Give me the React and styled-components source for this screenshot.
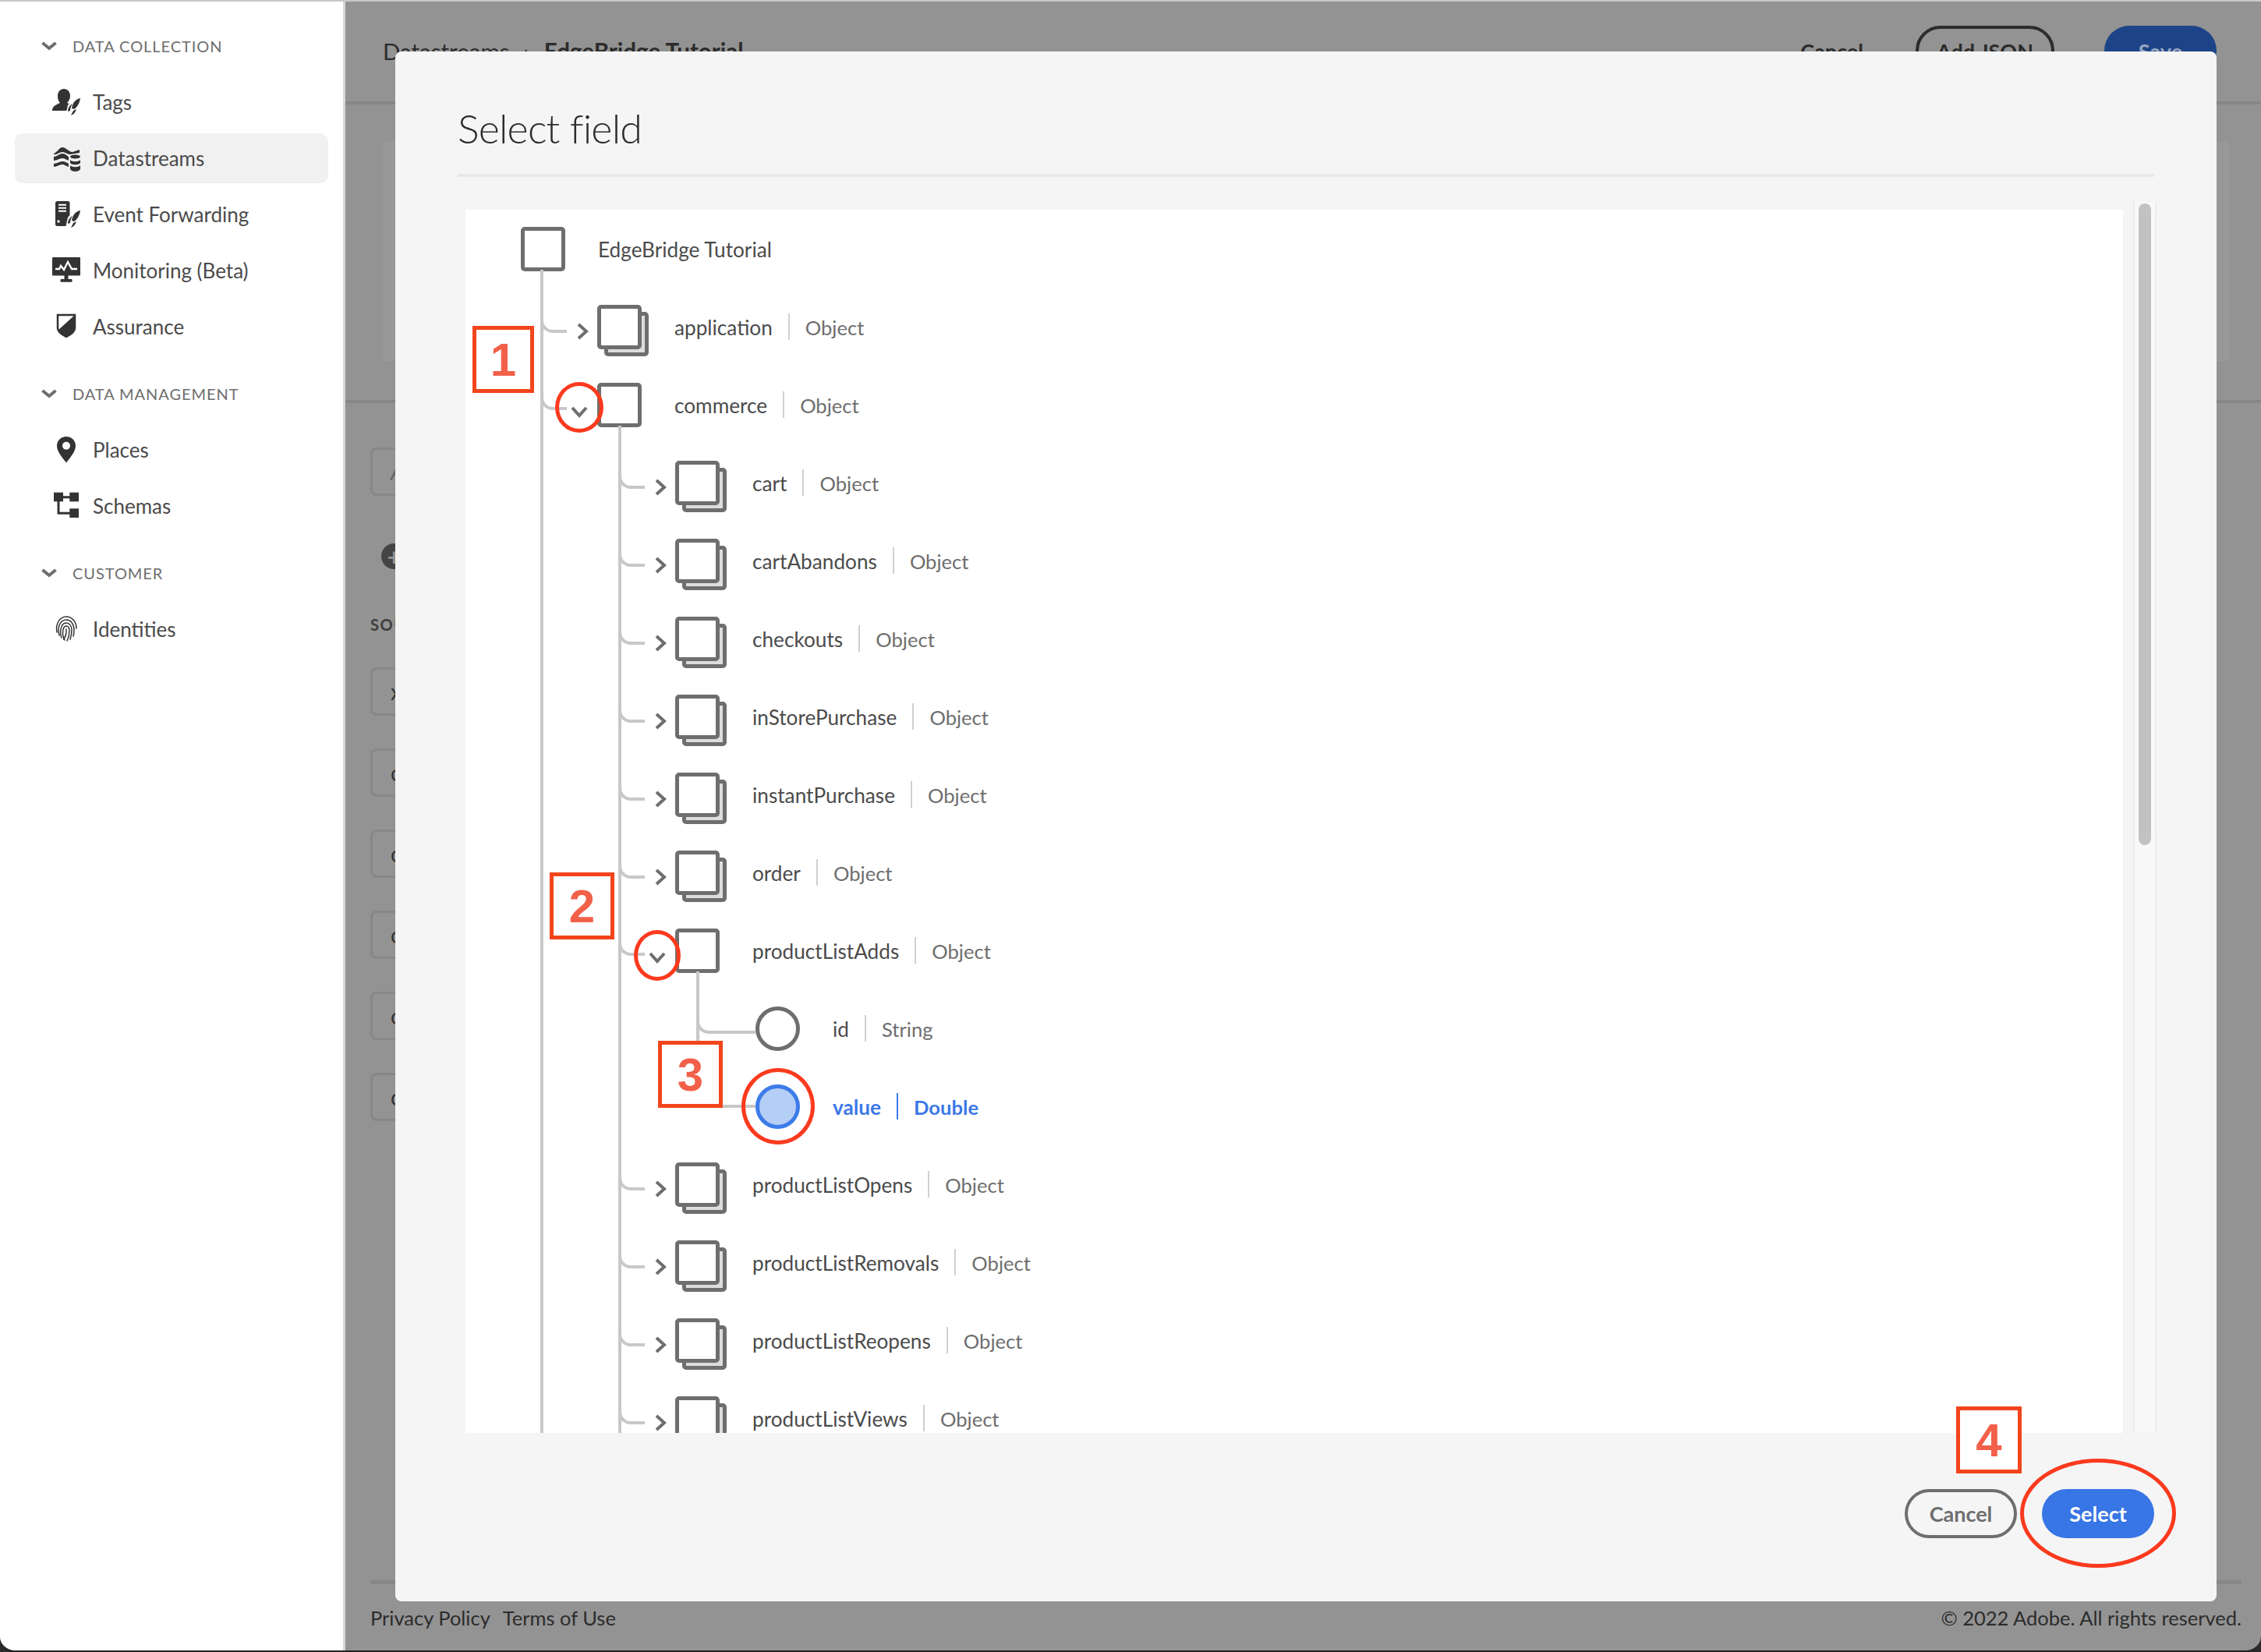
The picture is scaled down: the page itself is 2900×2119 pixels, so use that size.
import React from "react"
import styled, { createGlobalStyle } from "styled-components"

const FONT = `Lato, "Open Sans", sans-serif`

const GlobalStyle = createGlobalStyle`
  html, body {
    margin: 0;
    padding: 0;
    background: #2a2a2a;
    font-family: ${FONT};
  }
  * {
    box-sizing: border-box;
  }
`

const Frame = styled.div`
  background: #939393;
  border-bottom: 2px solid #222;
  border-radius: 0 0 20px 20px;
  border-top: 2px solid #c9c9c9;
  display: flex;
  height: 2119px;
  overflow: hidden;
  position: relative;
  width: 2900px;
`

/* left rail */
const Sidebar = styled.nav`
  background: #fff;
  border-right: 3px solid #d6d6d6;
  flex: 0 0 443px;
  padding-top: 21px;
`

const SectionHeader = styled.div`
  align-items: center;
  color: #6e6e6e;
  display: flex;
  font-size: 20px;
  gap: 20px;
  height: 72px;
  letter-spacing: 0.95px;
  margin-top: ${props => (props.first ? 0 : 14)}px;
  padding-left: 53px;
  text-transform: uppercase;
`

const NavList = styled.div`
  display: flex;
  flex-direction: column;
  gap: 8px;
  padding: 4px 19px;
`

const NavItem = styled.div`
  align-items: center;
  background: ${props => (props.active ? "#f1f1f1" : "transparent")};
  border-radius: 10px;
  color: #4b4b4b;
  display: flex;
  font-size: 26px;
  gap: 14px;
  height: 64px;
  padding-left: 46px;
`

const NavIcon = styled.svg`
  flex: none;
  height: 40px;
  width: 40px;
`

/* page behind the dialog */
const Main = styled.main`
  display: flex;
  flex: 1;
  flex-direction: column;
`

const Header = styled.header`
  align-items: center;
  border-bottom: 4px solid #878787;
  color: #2c2c2c;
  display: flex;
  flex: 0 0 132px;
  font-size: 29.5px;
  padding: 31px 57px 33px 48px;
`

const Crumb = styled.span`
  font-weight: ${props => (props.current ? 700 : 400)};
`

const CrumbArrow = styled.span`
  margin: 0 18px;
`

const HeaderActions = styled.div`
  align-items: center;
  display: flex;
  font-size: 27px;
  margin-left: auto;
`

const HeaderLink = styled.span`
  font-weight: 700;
  margin-right: 67px;
`

const HeaderButton = styled.div`
  align-items: center;
  background: ${props => (props.primary ? "#1d4488" : "transparent")};
  border: ${props => (props.primary ? "none" : "4px solid #2c2c2c")};
  border-radius: 32px;
  color: ${props => (props.primary ? "#9aa9c4" : "#2c2c2c")};
  display: flex;
  font-weight: 700;
  height: 64px;
  justify-content: center;
  margin-left: ${props => (props.primary ? 64 : 0)}px;
  width: ${props => (props.primary ? 144 : 178)}px;
`

const Band = styled.section`
  border-bottom: 4px solid #878787;
  flex: 0 0 383px;
  padding: 48px 41px 50px 48px;
`

const BandCard = styled.div`
  background: #989898;
  height: 100%;
`

const Body = styled.section`
  display: flex;
  flex: 1;
  flex-direction: column;
  padding: 57px 25px 0 32px;
`

const MappingBox = styled.div`
  align-items: center;
  border: 3px solid #878787;
  border-radius: 8px;
  color: ${props => (props.hint ? "#666" : "#333")};
  display: flex;
  flex: none;
  font-size: 28px;
  font-style: ${props => (props.hint ? "italic" : "normal")};
  height: 62px;
  margin-bottom: 42px;
  padding-left: 23px;
  width: 1400px;
`

const AddCircle = styled.div`
  align-items: center;
  background: #444;
  border-radius: 50%;
  color: #939393;
  display: flex;
  flex: none;
  font-size: 30px;
  font-weight: 700;
  height: 33px;
  justify-content: center;
  line-height: 1;
  margin: 19px 0 0 14px;
  width: 33px;
`

const SourceHeading = styled.div`
  color: #3d3d3d;
  flex: none;
  font-size: 20px;
  font-weight: 700;
  height: 67px;
  letter-spacing: 1.5px;
  line-height: 24px;
  margin-top: 59px;
`

const PageFooter = styled.footer`
  align-items: center;
  border-top: 5px solid #878787;
  color: #2c2c2c;
  display: flex;
  flex: none;
  font-size: 25.5px;
  gap: 16px;
  height: 90px;
  margin-top: auto;
`

const Copyright = styled.span`
  margin-left: auto;
`

/* dialog */
const Modal = styled.div`
  background: #f5f5f5;
  border-radius: 8px;
  display: flex;
  flex-direction: column;
  height: 1988px;
  left: 507px;
  padding: 0 80px;
  position: absolute;
  top: 64px;
  width: 2336px;
`

const ModalTitle = styled.h2`
  border-bottom: 4px solid #e9e9e9;
  color: #2c2c2c;
  font-size: 52px;
  font-weight: 300;
  height: 161px;
  letter-spacing: -0.85px;
  line-height: 64px;
  margin: 0;
  padding-top: 66px;
`

const ModalBody = styled.div`
  display: flex;
  gap: 13px;
  height: 1579px;
  margin-top: 32px;
`

const TreePanel = styled.div`
  background: #fff;
  flex: 0 0 2126px;
  margin: 10px 0 0 10px;
  overflow: hidden;
`

const ScrollTrack = styled.div`
  background: #f8f8f8;
  border-left: 2px solid #ebebeb;
  border-right: 2px solid #ebebeb;
  flex: 0 0 29px;
  padding: 2px 5px;
`

const ScrollThumb = styled.div`
  background: #c2c2c2;
  border-radius: 8px;
  height: 823px;
  width: 16px;
`

const ModalFooter = styled.div`
  display: flex;
  gap: 32px;
  justify-content: flex-end;
  padding-top: 72px;
`

const ModalButton = styled.button`
  background: ${props => (props.primary ? "#3875e5" : "transparent")};
  border: ${props => (props.primary ? "none" : "4px solid #6e6e6e")};
  border-radius: 32px;
  color: ${props => (props.primary ? "#fff" : "#6e6e6e")};
  font-family: ${FONT};
  font-size: 27px;
  font-weight: 700;
  height: 63px;
  width: 144px;
`

/* tree */
const Row = styled.div`
  align-items: center;
  display: flex;
  height: 100px;
  padding-left: ${props => (props.depth === 0 ? 71 : 143 + (props.depth - 1) * 100)}px;
  position: relative;
`

const Children = styled.div`
  position: relative;

  &::before {
    background: #c8c8c8;
    bottom: ${props => (props.closes ? 50 : 0)}px;
    content: "";
    left: ${props => 96 + (props.depth - 1) * 100}px;
    position: absolute;
    top: -23px;
    width: 4px;
  }
`

const Branch = styled.span`
  border-bottom: 4px solid #c8c8c8;
  border-bottom-left-radius: 16px;
  border-left: 4px solid #c8c8c8;
  height: 30px;
  left: ${props => 96 + (props.depth - 1) * 100}px;
  position: absolute;
  top: ${props => props.drop - 30}px;
  width: ${props => (props.leaf ? 76 : 34)}px;
`

const ChevronSlot = styled.span`
  display: flex;
  flex: 0 0 26px;
  position: relative;
`

const ChevronSvg = styled.svg`
  fill: none;
  margin-left: ${props => (props.open ? -8 : 0)}px;
  margin-top: ${props => (props.open ? 18 : 12)}px;
  stroke: #6e6e6e;
  stroke-width: 4;
`

const IconSlot = styled.span`
  flex: 0 0 99px;
  margin-left: ${props => (props.leaf ? 3 : 0)}px;
  position: relative;
`

const NodeBox = styled.span`
  background: #fff;
  border: 5px solid #6e6e6e;
  border-radius: 5px;
  display: block;
  height: 57px;
  position: relative;
  width: 57px;
`

const NodeBack = styled.span`
  background: #ddd;
  border: 5px solid #6e6e6e;
  border-radius: 5px;
  height: 57px;
  left: 9px;
  position: absolute;
  top: 9px;
  width: 57px;
`

const Radio = styled.span`
  background: ${props => (props.selected ? "#b5cef5" : "#fff")};
  border: 5px solid ${props => (props.selected ? "#3d7be8" : "#6e6e6e")};
  border-radius: 50%;
  display: block;
  height: 57px;
  position: relative;
  width: 57px;
`

const FieldName = styled.span`
  color: ${props => (props.selected ? "#3b78e7" : "#4b4b4b")};
  font-size: 26.2px;
  font-weight: ${props => (props.selected ? 700 : 400)};
  padding-top: 2px;
`

const FieldType = styled.span`
  border-left: 2px solid ${props => (props.selected ? "#3b78e7" : "#d0d0d0")};
  color: ${props => (props.selected ? "#3b78e7" : "#6e6e6e")};
  font-size: 25.6px;
  font-weight: ${props => (props.selected ? 700 : 400)};
  line-height: 32px;
  margin-left: 20px;
  padding: 2px 0 0 20px;
`

/* red tutorial markup over the dialog */
const StepBox = styled.div`
  align-items: center;
  background: #fff;
  border: 5px solid #f2451c;
  color: #f2604a;
  display: flex;
  font-family: "Liberation Sans", sans-serif;
  font-size: 60px;
  font-weight: 700;
  height: 86px;
  justify-content: center;
  left: ${props => props.x - 507}px;
  position: absolute;
  top: ${props => props.y - 66}px;
  width: ${props => props.w}px;
`

const Ring = styled.div`
  border: 5px solid #fb3a1e;
  border-radius: 50%;
  height: ${props => props.h}px;
  left: ${props => props.x - 507}px;
  position: absolute;
  top: ${props => props.y - 66}px;
  width: ${props => props.w}px;
`

const Chevron = ({ open }) =>
  open ? (
    <ChevronSvg open width="22" height="15" viewBox="0 0 22 15">
      <path d="M2 2 L11 12 L20 2" />
    </ChevronSvg>
  ) : (
    <ChevronSvg width="15" height="22" viewBox="0 0 15 22">
      <path d="M2 2 L12 11 L2 20" />
    </ChevronSvg>
  )

const SectionChevron = () => (
  <svg width="20" height="12" viewBox="0 0 20 12" fill="none" stroke="#6e6e6e" strokeWidth="4">
    <path d="M1.5 2 L10 9 L18.5 2" />
  </svg>
)

const Leaves = () => (
  <>
    <path d="M19 37 L22 24 C25 20 29 18 32 15 L40 12 L37 24 L30 39 Z" fill="#fff" />
    <path d="M38 15 C32 16 28 21 27 28 L30 29 C34 27 37 21 38 15Z" />
    <path d="M26 37 C29 36 32 33 33 29 L29 31 Z" />
    <path d="M22 32 C22 28 24 24 28 22 C26 25 25 28 25 31 Z" />
  </>
)

const icons = {
  tags: (
    <>
      <path d="M17 3 C22 3 25 7 25 12 C25 16 23 19 21 21 C24 22 25 23 26 23 L20 31 L2 31 C2 26 5 24 12 21 C10 19 9 16 9 12 C9 7 12 3 17 3Z" />
      <Leaves />
    </>
  ),
  datastreams: (
    <>
      <path d="M4 14 C8 13 11 6 15 6 C20 6 23 12 28 12 L37 9 L37 13 L25 15 C21 15 19 12 15 12 C11 12 8 16 4 15Z" />
      <path d="M4 18 C8 18 11 14 15 14 C19 14 21 17 23 18 L23 23 C20 22 18 20 15 20 C11 20 8 23 4 23Z" />
      <path d="M4 27 C8 27 11 24 15 24 C19 24 21 26 23 27 L23 31 C19 30 18 28 15 28 C11 28 8 31 4 31Z" />
      <ellipse cx="31.5" cy="18" rx="6.5" ry="2.5" />
      <path d="M25 22 C27 25 36 25 38 22 L38 26 C36 29 27 29 25 26Z" />
      <path d="M25 29 C27 32 36 32 38 29 L38 34 C36 38 27 38 25 34Z" />
    </>
  ),
  forwarding: (
    <>
      <rect x="6" y="3" width="18.5" height="32" rx="2.5" />
      <path d="M10 7.7 H20 M10 11.7 H20 M10 15.7 H20" stroke="#fff" strokeWidth="2" />
      <circle cx="10" cy="29" r="1.7" fill="#fff" />
      <Leaves />
    </>
  ),
  monitoring: (
    <>
      <rect x="2" y="3" width="36" height="23.5" rx="1" />
      <rect x="17.5" y="26" width="5" height="6" />
      <rect x="12.5" y="31" width="15" height="3.7" rx="1" />
      <path d="M6 18 H11 L13 14 L17 19 L22 9 L27 18 H34" fill="none" stroke="#fff" strokeWidth="2.4" />
    </>
  ),
  assurance: (
    <>
      <path d="M9 5 H31 V22 C31 27 25 30 20 33 C15 30 9 27 9 22Z" fill="#fff" stroke="#333" strokeWidth="2.5" />
      <path d="M31 5 V22 C31 27 25 30 20 33 C15 30 9 27 9 25Z" />
    </>
  ),
  places: (
    <>
      <path d="M20 3 C27 3 32 8 32 15 C32 22 25 30 20 36.5 C15 30 8 22 8 15 C8 8 13 3 20 3Z" />
      <circle cx="20" cy="14.7" r="5" fill="#fff" />
    </>
  ),
  schemas: (
    <>
      <rect x="4" y="2.7" width="12" height="11.6" />
      <rect x="24.3" y="2.7" width="11.7" height="11.6" />
      <rect x="24.3" y="23.3" width="11.7" height="11.7" />
      <path d="M14 8.7 H26 M10 12 V29.3 H26" fill="none" stroke="#333" strokeWidth="3" />
    </>
  ),
  identities: (
    <g fill="none" stroke="#333" strokeWidth="1.5" strokeLinecap="round">
      <path d="M8 24 C6 14 11 4 20 4 C28 4 33 11 33 19" />
      <path d="M11 28 C8 18 12 8 20 8 C26 8 30 14 30 21 C30 24 30 26 29 29" />
      <path d="M14 31 C11 24 13 12 20 12 C24 12 27 16 27 21 C27 26 26 30 25 33" />
      <path d="M18 34 C14 28 15 16 20 16 C23 16 24 19 24 22 C24 27 23 31 21 35" />
      <path d="M20 20 C20.5 26 19 30 16.5 33" />
    </g>
  ),
}

const navSections = [
  {
    title: "Data Collection",
    items: [
      { name: "Tags", icon: "tags" },
      { name: "Datastreams", icon: "datastreams", active: true },
      { name: "Event Forwarding", icon: "forwarding" },
      { name: "Monitoring (Beta)", icon: "monitoring" },
      { name: "Assurance", icon: "assurance" },
    ],
  },
  {
    title: "Data Management",
    items: [
      { name: "Places", icon: "places" },
      { name: "Schemas", icon: "schemas" },
    ],
  },
  {
    title: "Customer",
    items: [{ name: "Identities", icon: "identities" }],
  },
]

const commerceFields = [
  "cart",
  "cartAbandons",
  "checkouts",
  "inStorePurchase",
  "instantPurchase",
  "order",
]

const laterFields = [
  "productListOpens",
  "productListRemovals",
  "productListReopens",
  "productListViews",
]

const ObjectRow = ({ name, depth, open }) => (
  <Row depth={depth}>
    <Branch depth={depth} drop={open ? 57 : 58} />
    <ChevronSlot>
      <Chevron open={open} />
    </ChevronSlot>
    <IconSlot>
      {!open && <NodeBack />}
      <NodeBox />
    </IconSlot>
    <FieldName>{name}</FieldName>
    <FieldType>Object</FieldType>
  </Row>
)

const LeafRow = ({ name, type, selected }) => (
  <Row depth={3}>
    <Branch depth={3} leaf drop={selected ? 52 : 57} />
    <ChevronSlot />
    <IconSlot leaf>
      <Radio selected={selected} />
    </IconSlot>
    <FieldName selected={selected}>{name}</FieldName>
    <FieldType selected={selected}>{type}</FieldType>
  </Row>
)

const App = () => (
  <Frame>
    <GlobalStyle />
    <Sidebar>
      {navSections.map((section, idx) => (
        <div key={section.title}>
          <SectionHeader first={idx === 0}>
            <SectionChevron />
            {section.title}
          </SectionHeader>
          <NavList>
            {section.items.map(item => (
              <NavItem key={item.name} active={item.active}>
                <NavIcon viewBox="0 0 40 40" fill="#333">
                  {icons[item.icon]}
                </NavIcon>
                {item.name}
              </NavItem>
            ))}
          </NavList>
        </div>
      ))}
    </Sidebar>

    <Main>
      <Header>
        <Crumb>Datastreams</Crumb>
        <CrumbArrow>›</CrumbArrow>
        <Crumb current>EdgeBridge Tutorial</Crumb>
        <HeaderActions>
          <HeaderLink>Cancel</HeaderLink>
          <HeaderButton>Add JSON</HeaderButton>
          <HeaderButton primary>Save</HeaderButton>
        </HeaderActions>
      </Header>
      <Band>
        <BandCard />
      </Band>
      <Body>
        <MappingBox hint>A</MappingBox>
        <AddCircle>+</AddCircle>
        <SourceHeading>SOURCE</SourceHeading>
        <MappingBox>x</MappingBox>
        {new Array(5).fill(0).map((elm, idx) => (
          <MappingBox key={idx}>c</MappingBox>
        ))}
        <PageFooter>
          <span>Privacy Policy</span>
          <span>Terms of Use</span>
          <Copyright>© 2022 Adobe. All rights reserved.</Copyright>
        </PageFooter>
      </Body>
    </Main>

    <Modal>
      <ModalTitle>Select field</ModalTitle>
      <ModalBody>
        <TreePanel>
          <Row depth={0}>
            <IconSlot>
              <NodeBox />
            </IconSlot>
            <FieldName>EdgeBridge Tutorial</FieldName>
          </Row>
          <Children depth={1}>
            <ObjectRow name="application" depth={1} />
            <ObjectRow name="commerce" depth={1} open />
            <Children depth={2}>
              {commerceFields.map(name => (
                <ObjectRow key={name} name={name} depth={2} />
              ))}
              <ObjectRow name="productListAdds" depth={2} open />
              <Children depth={3} closes>
                <LeafRow name="id" type="String" />
                <LeafRow name="value" type="Double" selected />
              </Children>
              {laterFields.map(name => (
                <ObjectRow key={name} name={name} depth={2} />
              ))}
            </Children>
          </Children>
        </TreePanel>
        <ScrollTrack>
          <ScrollThumb />
        </ScrollTrack>
      </ModalBody>
      <ModalFooter>
        <ModalButton>Cancel</ModalButton>
        <ModalButton primary>Select</ModalButton>
      </ModalFooter>

      <StepBox x={606} y={418} w={79}>1</StepBox>
      <StepBox x={705} y={1119} w={83}>2</StepBox>
      <StepBox x={844} y={1335} w={83}>3</StepBox>
      <StepBox x={2509} y={1804} w={84}>4</StepBox>
      <Ring x={712} y={490} w={62} h={65} />
      <Ring x={813} y={1193} w={60} h={65} />
      <Ring x={951} y={1370} w={94} h={98} />
      <Ring x={2591} y={1871} w={200} h={140} />
    </Modal>
  </Frame>
)

export default App
